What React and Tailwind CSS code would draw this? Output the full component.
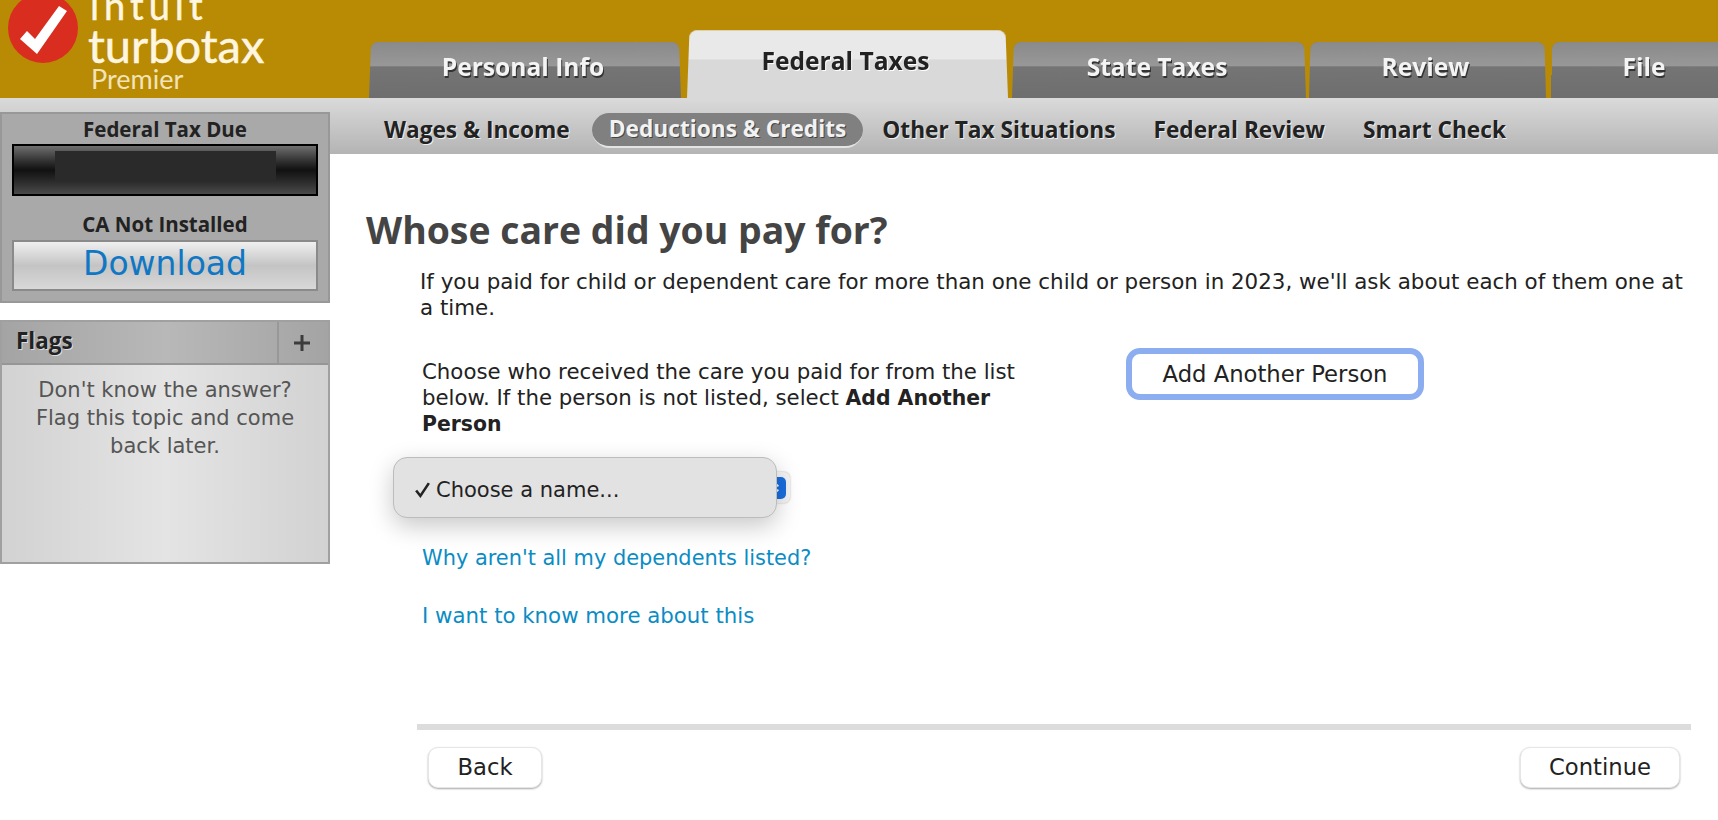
const font = "font-['DejaVu_Sans',sans-serif]";
const boldFont = "font-['Open_Sans',sans-serif] font-bold";

const Tab = ({ label, width, active }) => {
  if (active) {
    return (
      <div className={`${width} h-[69px] shrink-0 relative flex justify-center pt-[15px] pr-[4px]`}>
        <div className="absolute inset-0 origin-bottom rounded-t-[8px] bg-[#d9d9d9] overflow-hidden [transform:perspective(300px)_rotateX(4deg)]">
          <div className="h-[30px] bg-[#e9e9e9]" />
        </div>
        <span className={`relative text-[24.6px] leading-[34px] text-[#222] [text-shadow:1px_1px_0_#fff] ${boldFont}`}>{label}</span>
      </div>
    );
  }
  return (
    <div className={`${width} h-[57px] shrink-0 relative flex justify-center pt-[9px] pr-[4px]`}>
      <div className="absolute inset-0 origin-bottom rounded-t-[8px] bg-gradient-to-b from-[#7a7a7a] to-[#6e6e6e] overflow-hidden [transform:perspective(300px)_rotateX(4deg)]">
        <div className="h-[25px] bg-gradient-to-b from-[#8a8a8a] to-[#989898]" />
      </div>
      <span className={`relative text-[24.6px] leading-[34px] text-[#f4f4f4] [text-shadow:1px_2px_0_#333] ${boldFont}`}>{label}</span>
    </div>
  );
};

const SubItem = ({ label, active }) =>
  active ? (
    <div className={`h-[35px] ml-[3px] px-[17px] rounded-full bg-[#808080] border-b-2 border-b-[#e4e4e4] flex items-center text-[22.7px] text-[#f2f2f2] [text-shadow:1px_1px_0_#444] ${boldFont}`}>
      {label}
    </div>
  ) : (
    <div className={`px-[19px] text-[22.7px] text-[#222] [text-shadow:1px_1px_0_#eee] ${boldFont}`}>{label}</div>
  );

const Logo = () => (
  <div className="w-[369px] h-[98px] flex shrink-0 overflow-hidden">
    <svg viewBox="0 0 70 70" className="w-[70px] h-[70px] ml-[8px] -mt-[7px] shrink-0">
      <circle cx="35" cy="35" r="35" fill="#d92d20" />
      <path d="M12 46 L29 61 L59 18 L51 13 L27 46 L19 38 Z" fill="#fff" />
    </svg>
    <div className="ml-[10px] -mt-[11px] text-[#fff6e0] font-['Lato',sans-serif] flex flex-col">
      <div className="ml-[2px] text-[38px] leading-[32px] tracking-[5px] [-webkit-text-stroke:0.5px_#fff6e0]">intuit</div>
      <div className="text-[47px] leading-[44px] mt-[2px] [-webkit-text-stroke:0.5px_#fff6e0]">turbotax</div>
      <div className="ml-[3px] text-[27px] leading-[24px] text-[#f2e3b8]">Premier</div>
    </div>
  </div>
);

const Sidebar = () => (
  <div className="w-[330px] shrink-0 relative">
    <div className="h-[191px] bg-[#a9a9a9] border-2 border-[#989898] px-[10px] pt-[2px] flex flex-col items-stretch">
      <div className={`text-[20.5px] leading-[26px] text-[#222] text-center ${boldFont}`}>Federal Tax Due</div>
      <div className="mt-[2px] h-[52px] border-2 border-black bg-gradient-to-b from-[#707070] via-[#111] to-[#4a4a4a] flex justify-center pt-[5px]">
        <div className="w-[221px] h-[30px] bg-[#2a2a2a]" />
      </div>
      <div className={`mt-[15px] text-[20.5px] leading-[26px] text-[#222] text-center ${boldFont}`}>CA Not Installed</div>
      <div className="mt-[3px] h-[51px] pb-[4px] border-2 border-[#8a8a8a] bg-gradient-to-b from-[#f0f0f0] via-[#c4c4c4] to-[#d8d8d8] flex items-center justify-center text-[33px] text-[#0f77c4]">
        Download
      </div>
    </div>
    <div className="mt-[17px] h-[244px] border-2 border-[#a0a0a0] flex flex-col">
      <div className="h-[43px] flex border-b-2 border-b-[#969696] bg-gradient-to-r from-[#a4a4a4] via-[#b8b8b8] to-[#a4a4a4]">
        <div className={`flex-1 pl-[14px] text-[22.5px] leading-[38px] text-[#222] [text-shadow:1px_1px_0_#ddd] ${boldFont}`}>Flags</div>
        <div className="w-[51px] border-l-2 border-l-[#989898] flex items-center justify-center pr-[4px]">
          <svg viewBox="0 0 16 16" className="w-[16px] h-[16px]">
            <path d="M6.5 0h3v6.5H16v3H9.5V16h-3V9.5H0v-3h6.5z" fill="#3c3c3c" />
          </svg>
        </div>
      </div>
      <div className="flex-1 bg-gradient-to-r from-[#d2d2d2] via-[#e4e4e4] to-[#d2d2d2] px-[20px] pt-[11px] text-center text-[21px] leading-[28px] text-[#555]">
        Don't know the answer? Flag this topic and come back later.
      </div>
    </div>
  </div>
);

const PlainButton = ({ label, width }) => (
  <button className={`${width} h-[41px] rounded-[10px] bg-white border border-[#e6e6e6] shadow-[0_1px_2px_rgba(0,0,0,0.35)] text-[22.7px] text-[#222]`}>
    {label}
  </button>
);

export default function App() {
  return (
    <div className={`w-[1718px] h-[820px] overflow-hidden bg-white ${font}`}>
      <header className="h-[98px] bg-[#b98a03] flex items-end">
        <Logo />
        <div className="flex items-end flex-1">
          <Tab label="Personal Info" width="w-[312px]" />
          <div className="w-[6px] shrink-0" />
          <Tab label="Federal Taxes" width="w-[321px]" active />
          <div className="w-[4px] shrink-0" />
          <Tab label="State Taxes" width="w-[294px]" />
          <div className="w-[3px] shrink-0" />
          <Tab label="Review" width="w-[237px]" />
          <div className="w-[5px] shrink-0" />
          <Tab label="File" width="w-[190px]" />
        </div>
      </header>

      <nav className="h-[56px] bg-gradient-to-b from-[#dadada] to-[#b4b4b4] flex items-center pl-[365px] pt-[9px]">
        <SubItem label="Wages & Income" />
        <SubItem label="Deductions & Credits" active />
        <SubItem label="Other Tax Situations" />
        <SubItem label="Federal Review" />
        <SubItem label="Smart Check" />
      </nav>

      <div className="flex -mt-[42px]">
        <Sidebar />
        <main className="flex-1 pt-[42px] text-[#222]">
          <h1 className={`ml-[36px] mt-[56px] text-[37.4px] leading-[40px] text-[#444] ${boldFont}`}>Whose care did you pay for?</h1>
          <p className="ml-[90px] mt-[19px] w-[1270px] text-[21.4px] leading-[26px]">
            If you paid for child or dependent care for more than one child or person in 2023, we'll ask about each of them one at a time.
          </p>
          <div className="ml-[92px] mt-[38px] flex items-start">
            <p className="w-[600px] text-[21.3px] leading-[26px]">
              Choose who received the care you paid for from the list below. If the person is not listed, select <b className="text-[20.4px]">Add Another Person</b>
            </p>
            <button className="ml-[104px] -mt-[11px] w-[298px] h-[52px] rounded-[14px] bg-white border-[6px] border-[#8caef0] text-[22.7px] text-[#222]">
              Add Another Person
            </button>
          </div>
          <div className="ml-[92px] mt-[35px] relative w-[368px] h-[31px] rounded-[6px] bg-[#f4f4f4] shadow-[0_0_2px_rgba(0,0,0,0.3)] flex justify-end items-center pr-[4px]">
            <div className="w-[20px] h-[22px] rounded-[5px] bg-[#1a6fe0] flex items-center justify-center">
              <svg viewBox="0 0 10 16" className="w-[8px] h-[14px]" fill="none" stroke="#fff" strokeWidth="2">
                <path d="M2 6l3-3 3 3M2 10l3 3 3-3" />
              </svg>
            </div>
            <div className="absolute -left-[29px] -top-[15px] w-[384px] h-[61px] rounded-[14px] bg-[#e2e2e2] border border-[#bcbcbc] shadow-[0_8px_24px_rgba(0,0,0,0.22)] flex items-center pl-[20px] pt-[6px] text-[21px]">
              <svg viewBox="0 0 16 16" className="w-[17px] h-[17px] mr-[5px] -mt-[3px]" fill="none" stroke="#222" strokeWidth="2.4">
                <path d="M2 9l4 5L14 2" />
              </svg>
              Choose a name...
            </div>
          </div>
          <a className="block ml-[92px] mt-[42px] text-[20.9px] leading-[26px] text-[#0a8cc4]">Why aren't all my dependents listed?</a>
          <a className="block ml-[92px] mt-[32px] text-[21.3px] leading-[26px] text-[#0a8cc4]">I want to know more about this</a>
          <div className="ml-[87px] mt-[95px] w-[1274px] h-[6px] bg-[#dcdcdc]" />
          <div className="ml-[98px] mt-[17px] w-[1252px] flex justify-between">
            <PlainButton label="Back" width="w-[114px]" />
            <PlainButton label="Continue" width="w-[160px]" />
          </div>
        </main>
      </div>
    </div>
  );
}
